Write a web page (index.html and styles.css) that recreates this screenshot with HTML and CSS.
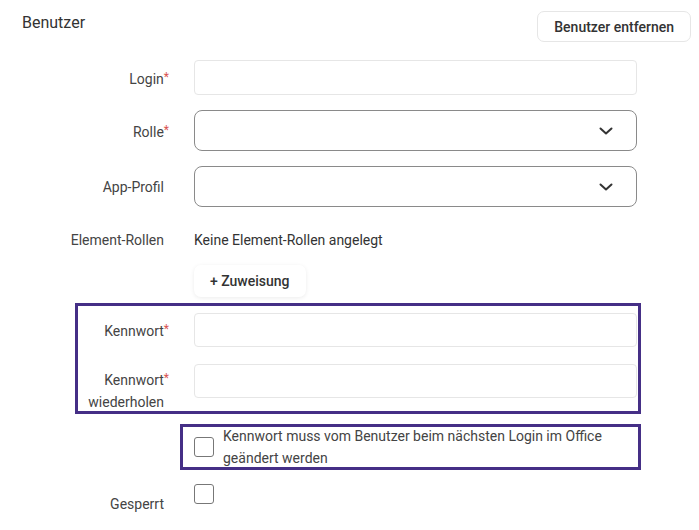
FILE: index.html
```html
<!DOCTYPE html>
<html>
<head>
  <title>Benutzer</title>
  <link rel="stylesheet" href="styles.css">
</head>
<body>

<div class="header">
  <h2>Benutzer</h2>
  <button class="btn">Benutzer entfernen</button>
</div>

<div class="form">
  <div class="row row-login">
    <label class="row-label">Login<span class="req">*</span></label>
    <input type="text" class="text-input">
  </div>

  <div class="row">
    <label class="row-label">Rolle<span class="req">*</span></label>
    <div class="select">
      <svg width="14" height="8" viewBox="0 0 14 8"><path d="M1.5 1.5 L7 6.5 L12.5 1.5" fill="none" stroke="#333" stroke-width="2" stroke-linecap="round" stroke-linejoin="round"/></svg>
    </div>
  </div>

  <div class="row">
    <label class="row-label">App-Profil</label>
    <div class="select">
      <svg width="14" height="8" viewBox="0 0 14 8"><path d="M1.5 1.5 L7 6.5 L12.5 1.5" fill="none" stroke="#333" stroke-width="2" stroke-linecap="round" stroke-linejoin="round"/></svg>
    </div>
  </div>

  <div class="row row-text">
    <label class="row-label">Element-Rollen</label>
    <span class="value">Keine Element-Rollen angelegt</span>
  </div>

  <div class="row row-add">
    <span class="row-label"></span>
    <button class="btn btn-add">+ Zuweisung</button>
  </div>

  <div class="highlight pw-box">
    <div class="row">
      <label class="row-label">Kennwort<span class="req">*</span></label>
      <input type="password" class="text-input">
    </div>
    <div class="row row-repeat">
      <label class="row-label">Kennwort<span class="req">*</span><br>wiederholen</label>
      <input type="password" class="text-input">
    </div>
  </div>

  <div class="highlight change-box">
    <label class="check">
      <span class="box"></span>
      <span>Kennwort muss vom Benutzer beim nächsten Login im Office geändert werden</span>
    </label>
  </div>

  <div class="row row-locked">
    <label class="row-label">Gesperrt</label>
    <span class="box"></span>
  </div>
</div>

</body>
</html>
```

FILE: styles.css
```css
body {
  margin: 0;
  font-family: Roboto, "Liberation Sans", sans-serif;
  font-size: 14px;
  color: #333;
  background: #fff;
}
.header {
  display: flex;
  justify-content: space-between;
  align-items: flex-start;
  padding: 11px 8px 0 22px;
  height: 49px;
}
.header h2 {
  margin: 2px 0 0;
  font-size: 16px;
  font-weight: 400;
  color: #333;
}
.btn {
  font-family: inherit;
  font-size: 14px;
  font-weight: 500;
  color: #333;
  background: #fff;
  border: 1px solid #e6e6e6;
  border-radius: 7px;
  height: 31px;
  padding: 0 16px;
}
.form {
  width: 641px;
}
.row {
  display: flex;
  align-items: center;
  margin-bottom: 15px;
}
.row-label {
  box-sizing: border-box;
  width: 194px;
  flex: none;
  padding-right: 30px;
  text-align: right;
  color: #444;
  line-height: 22px;
}
.req {
  color: #d9534f;
  font-size: 12px;
  vertical-align: 3px;
  margin-right: -5px;
}
.text-input {
  box-sizing: border-box;
  width: 443px;
  height: 35px;
  border: 1px solid #e6e6e6;
  border-radius: 4px;
  padding: 0 10px;
  font-family: inherit;
  font-size: 14px;
}
.select {
  box-sizing: border-box;
  width: 443px;
  height: 41px;
  border: 1px solid #8a8a8a;
  border-radius: 8px;
  display: flex;
  align-items: center;
  justify-content: flex-end;
  padding-right: 23px;
}
.row-text {
  margin-top: 22px;
  margin-bottom: 14px;
}
.value {
  color: #333;
}
.row-add {
  margin-bottom: 6px;
}
.btn-add {
  border: none;
  height: 32px;
  padding: 0 16px;
  box-shadow: 0 1px 4px rgba(0, 0, 0, 0.08);
}
.highlight {
  box-sizing: border-box;
  border: 3px solid #452f86;
}
.pw-box {
  margin-left: 75px;
  width: 566px;
  padding-top: 7px;
  height: 111px;
}
.pw-box .row-label {
  width: 116px;
}
.pw-box .text-input {
  height: 34px;
}
.pw-box .row {
  margin-bottom: 17px;
}
.row-repeat {
  align-items: flex-start;
}
.row-repeat .row-label {
  padding-top: 3px;
}
.change-box {
  margin: 10px 0 0 180px;
  width: 461px;
  height: 46px;
  padding-left: 11px;
}
.check {
  display: flex;
  align-items: center;
  gap: 9px;
  margin-top: -2px;
  line-height: 22px;
  color: #444;
}
.box {
  box-sizing: border-box;
  flex: none;
  width: 20px;
  height: 20px;
  border: 1.5px solid #777;
  border-radius: 3px;
  background: #fff;
}
.row-locked {
  margin-top: 14px;
  align-items: flex-start;
}
.row-locked .row-label {
  padding-top: 9px;
}
```
